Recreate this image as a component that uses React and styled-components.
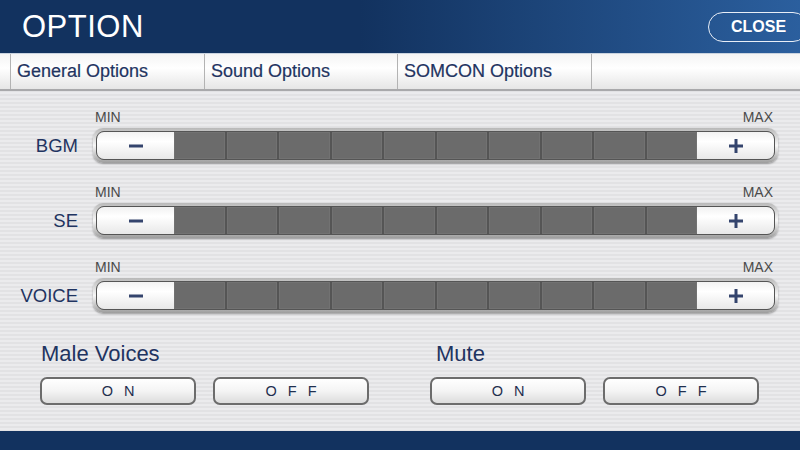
import React from "react";
import styled, { createGlobalStyle } from "styled-components";

const GlobalStyle = createGlobalStyle`
  html, body {
    margin: 0;
    padding: 0;
    width: 800px;
    height: 450px;
    overflow: hidden;
    font-family: "Liberation Sans", Arial, sans-serif;
  }
`;

const Screen = styled.div`
  width: 800px;
  height: 450px;
  display: flex;
  flex-direction: column;
  background: repeating-linear-gradient(
    to bottom,
    #ebebed 0px,
    #ebebed 2px,
    #e2e2e4 2px,
    #e2e2e4 4px
  );
`;

const Header = styled.div`
  height: 54px;
  display: flex;
  align-items: center;
  justify-content: space-between;
  padding-left: 22px;
  background: linear-gradient(to right, #12325f 0%, #12325f 45%, #2b5f9e 100%);
  border-bottom: 1px solid #c9d3df;
  box-sizing: border-box;
`;

const Title = styled.h1`
  margin: 0;
  color: #fff;
  font-weight: normal;
  font-size: 31px;
  letter-spacing: 0.5px;
`;

const CloseButton = styled.button`
  width: 100px;
  height: 30px;
  margin-right: -8px;
  margin-top: 1px;
  border: 1.5px solid #e8eef7;
  border-radius: 15px;
  background: transparent;
  color: #fff;
  font-family: "Liberation Sans", Arial, sans-serif;
  font-weight: bold;
  font-size: 16px;
  text-align: left;
  padding-left: 22px;
`;

const TabBar = styled.div`
  height: 37px;
  display: grid;
  grid-template-columns: 10px 194px 193px 194px 1fr;
  background: linear-gradient(to bottom, #f4f4f4 0%, #ffffff 40%, #e6e6e6 100%);
  border-bottom: 2px solid #a9a9ab;
  box-sizing: border-box;
`;

const Tab = styled.div`
  display: flex;
  align-items: center;
  padding-left: 6px;
  border-left: 1px solid #b3b3b3;
  color: #1f3461;
  font-size: 18px;
  -webkit-text-stroke: 0.2px #1f3461;
`;

const Body = styled.div`
  flex: 1;
  display: flex;
  flex-direction: column;
  padding-top: 19px;
`;

const SliderRow = styled.div`
  display: grid;
  grid-template-columns: 93px 685px;
  grid-template-rows: 14px 35px;
  row-gap: 4px;
  margin-bottom: 22px;
`;

const RangeLabels = styled.div`
  grid-column: 2;
  display: flex;
  justify-content: space-between;
  padding: 0 5px 0 2px;
  font-size: 14px;
  line-height: 14px;
  color: #4a4a4a;
`;

const RowLabel = styled.div`
  grid-column: 1;
  grid-row: 2;
  display: flex;
  align-items: center;
  justify-content: flex-end;
  padding-right: 15px;
  font-size: 18.5px;
  color: #1f3461;
`;

const Track = styled.div`
  grid-column: 2;
  grid-row: 2;
  display: flex;
  padding: 3px;
  border-radius: 10px;
  background: linear-gradient(to bottom, #b9b9b9, #f6f6f6 50%, #9d9d9d);
  box-shadow: 0 1px 2px rgba(0, 0, 0, 0.35);
`;

const Inner = styled.div`
  flex: 1;
  display: flex;
  border: 1px solid #555;
  border-radius: 8px;
  overflow: hidden;
  background: #5a5a5a;
`;

const StepButton = styled.div`
  width: 77px;
  display: flex;
  align-items: center;
  justify-content: center;
  background: linear-gradient(to bottom, #f2f2f2 0%, #ffffff 35%, #e8e8e8 100%);
`;

const Sign = styled.svg`
  width: 16px;
  height: 16px;
`;

const Cells = styled.div`
  flex: 1;
  display: grid;
  grid-template-columns: repeat(10, 1fr);
  gap: 2px;
  background: #555;
`;

const Cell = styled.div`
  background: #6b6b6b;
  border: 1px solid #727272;
`;

const Toggles = styled.div`
  display: grid;
  grid-template-columns: 390px 390px;
  padding-left: 40px;
  margin-top: 6px;
`;

const ToggleGroup = styled.div`
  display: flex;
  flex-direction: column;
`;

const ToggleTitle = styled.div`
  font-size: 22px;
  color: #1f3461;
  padding-left: ${(p) => p.indent}px;
  margin-bottom: 10px;
  line-height: 26px;
`;

const ToggleButtons = styled.div`
  display: flex;
  gap: 17px;
`;

const ToggleButton = styled.div`
  width: 152px;
  height: 24px;
  display: flex;
  align-items: center;
  justify-content: center;
  border: 2px solid #6c6c6c;
  border-radius: 7px;
  background: linear-gradient(to bottom, #ffffff 0%, #f4f4f4 50%, #dcdcdc 100%);
  color: #1f2f4f;
  font-size: 14.5px;
  letter-spacing: 11px;
  text-indent: 11px;
`;

const Footer = styled.div`
  height: 19px;
  background: #12325f;
`;

const sliders = ["BGM", "SE", "VOICE"];

const Minus = () => (
  <Sign viewBox="0 0 16 16">
    <rect x="1" y="6.5" width="14" height="3" fill="#34446d" />
  </Sign>
);

const Plus = () => (
  <Sign viewBox="0 0 16 16">
    <rect x="1" y="6.5" width="14" height="3" fill="#34446d" />
    <rect x="6.5" y="1" width="3" height="14" fill="#34446d" />
  </Sign>
);

const Slider = ({ label }) => (
  <SliderRow>
    <RangeLabels>
      <span>MIN</span>
      <span>MAX</span>
    </RangeLabels>
    <RowLabel>{label}</RowLabel>
    <Track>
      <Inner>
        <StepButton>
          <Minus />
        </StepButton>
        <Cells>
          {Array.from({ length: 10 }).map((_, i) => (
            <Cell key={i} />
          ))}
        </Cells>
        <StepButton>
          <Plus />
        </StepButton>
      </Inner>
    </Track>
  </SliderRow>
);

const App = () => (
  <>
    <GlobalStyle />
    <Screen>
      <Header>
        <Title>OPTION</Title>
        <CloseButton>CLOSE</CloseButton>
      </Header>
      <TabBar>
        <div />
        <Tab>General Options</Tab>
        <Tab>Sound Options</Tab>
        <Tab>SOMCON Options</Tab>
        <Tab />
      </TabBar>
      <Body>
        {sliders.map((s) => (
          <Slider key={s} label={s} />
        ))}
        <Toggles>
          <ToggleGroup>
            <ToggleTitle indent={1}>Male Voices</ToggleTitle>
            <ToggleButtons>
              <ToggleButton>ON</ToggleButton>
              <ToggleButton>OFF</ToggleButton>
            </ToggleButtons>
          </ToggleGroup>
          <ToggleGroup>
            <ToggleTitle indent={6}>Mute</ToggleTitle>
            <ToggleButtons>
              <ToggleButton>ON</ToggleButton>
              <ToggleButton>OFF</ToggleButton>
            </ToggleButtons>
          </ToggleGroup>
        </Toggles>
      </Body>
      <Footer />
    </Screen>
  </>
);

export default App;
